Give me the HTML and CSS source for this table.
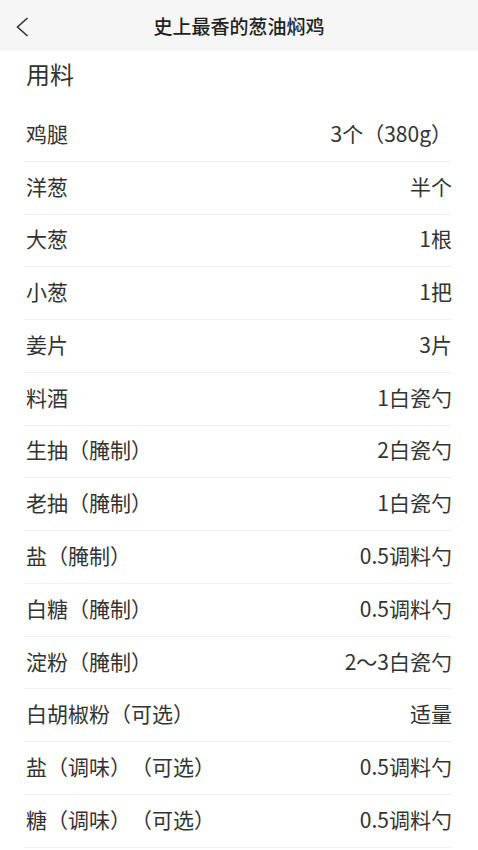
FILE: index.html
```html
<!DOCTYPE html>
<html lang="zh">
<head>
<meta charset="utf-8">
<link rel="stylesheet" href="styles.css">
</head>
<body>
<header class="nav">
  <svg class="back" width="14" height="20" viewBox="0 0 14 20"><path d="M12.5 1 L2.5 10 L12.5 19" fill="none" stroke="#333" stroke-width="1.6"/></svg>
  <div class="title">史上最香的葱油焖鸡</div>
</header>
<h2 class="section">用料</h2>
<ul class="list">
  <li><span>鸡腿</span><span>3个（380g）</span></li>
  <li><span>洋葱</span><span>半个</span></li>
  <li><span>大葱</span><span>1根</span></li>
  <li><span>小葱</span><span>1把</span></li>
  <li><span>姜片</span><span>3片</span></li>
  <li><span>料酒</span><span>1白瓷勺</span></li>
  <li><span>生抽（腌制）</span><span>2白瓷勺</span></li>
  <li><span>老抽（腌制）</span><span>1白瓷勺</span></li>
  <li><span>盐（腌制）</span><span>0.5调料勺</span></li>
  <li><span>白糖（腌制）</span><span>0.5调料勺</span></li>
  <li><span>淀粉（腌制）</span><span>2～3白瓷勺</span></li>
  <li><span>白胡椒粉（可选）</span><span>适量</span></li>
  <li><span>盐（调味）（可选）</span><span>0.5调料勺</span></li>
  <li><span>糖（调味）（可选）</span><span>0.5调料勺</span></li>
</ul>
</body>
</html>
```
FILE: styles.css
```css
* { box-sizing: border-box; }
html, body { margin: 0; padding: 0; background: #fff; }
body {
  font-family: "Noto Sans CJK SC", "Noto Sans", sans-serif;
  color: #333;
  overflow: hidden;
  text-spacing-trim: space-all;
}
.nav {
  position: relative;
  height: 51px;
  background: #f6f6f6;
  display: flex;
  align-items: center;
  justify-content: center;
}
.back {
  position: absolute;
  left: 15px;
  top: 17px;
}
.title {
  font-size: 19px;
  font-weight: 500;
  color: #222;
}
.section {
  margin: 0;
  height: 58px;
  padding: 6px 0 0 26px;
  display: flex;
  align-items: flex-start;
  font-size: 24px;
  font-weight: 400;
  line-height: 34px;
  color: #333;
}
.list {
  list-style: none;
  margin: 0;
  padding: 0 26px 0 24px;
}
.list li {
  height: 52.77px;
  display: flex;
  align-items: center;
  justify-content: space-between;
  padding: 0 0 4px 2px;
  border-bottom: 1px solid #f0f0f0;
  font-size: 21px;
  color: #333;
}
```
